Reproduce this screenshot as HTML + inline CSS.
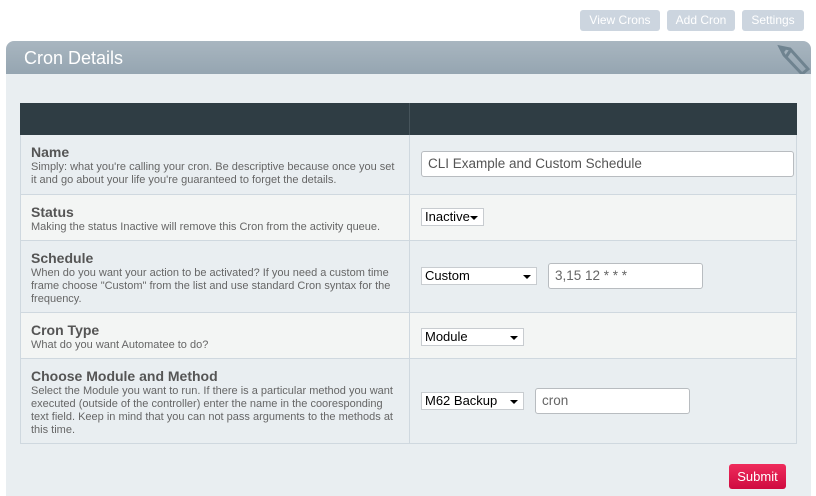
<!DOCTYPE html>
<html><head><style>
*{margin:0;padding:0;box-sizing:border-box}
body{width:816px;height:496px;background:#fff;font-family:"Liberation Sans",Arial,sans-serif;position:relative;overflow:hidden}
.a{position:absolute}
.btn{position:absolute;top:10px;height:21px;background:#ccd5df;color:#fff;font-size:12px;line-height:21px;text-align:center;border-radius:3px}
.hdr{left:6px;top:41px;width:805px;height:33px;border-radius:8px 8px 0 0;background:linear-gradient(#a9b6c0,#95a5b1);color:#fff;font-size:18px;line-height:35px;padding-left:18px}
.body{left:6px;top:74px;width:805px;height:422px;background:#e9eef1}
.row{position:absolute;left:20px;width:777px;border:1px solid #cfd8df;border-top:none}
.l{position:absolute;left:0;top:0;bottom:0;width:389px;border-right:1px solid #cfd8df;padding:9px 10px}
.l b{display:block;font-size:14px;color:#555;margin-bottom:1px}
.l span{font-size:11px;color:#666;line-height:13px;display:block}
.sel{position:absolute;height:18px;background:#fff;border:1px solid #c8ccd0;font-size:13px;line-height:16px;padding-left:3px;color:#000}
.sel:after{content:"";position:absolute;right:5px;top:7px;border:4px solid transparent;border-top:4px solid #000;border-bottom:none}
.inp{position:absolute;height:26px;background:#fff;border:1px solid #b8bcc0;border-radius:3px;font-size:13.5px;line-height:24px;padding-left:6px;color:#666}
</style></head><body>
<div class="btn" style="left:580px;width:80px">View Crons</div>
<div class="btn" style="left:667px;width:68px">Add Cron</div>
<div class="btn" style="left:742px;width:62px">Settings</div>
<div class="a hdr">Cron Details</div>
<svg class="a" style="left:776px;top:43px" width="34" height="31" viewBox="0 0 34 31"><g fill="none" stroke="#6f8390" stroke-width="3"><path d="M4 4 L14 6 L32 26 L26 31 L8 12 Z"/><path d="M4 4 L9 8"/><path d="M14 8 L10 14"/></g></svg>
<div class="a body"></div>
<div class="a" style="left:20px;top:103px;width:777px;height:32px;background:#2f3d44"><div class="a" style="left:389px;top:0;width:1px;height:32px;background:#46545b"></div></div>
<div class="row" style="top:135px;height:60px;background:#e9eef1"><div class="l"><b>Name</b><span>Simply: what you're calling your cron. Be descriptive because once you set it and go about your life you're guaranteed to forget the details.</span></div>
<div class="inp" style="left:400px;top:16px;width:373px;color:#555">CLI Example and Custom Schedule</div></div>
<div class="row" style="top:195px;height:46px;background:#f3f5f4"><div class="l"><b>Status</b><span>Making the status Inactive will remove this Cron from the activity queue.</span></div>
<div class="sel" style="left:400px;top:13px;width:63px">Inactive</div></div>
<div class="row" style="top:241px;height:72px;background:#e9eef1"><div class="l"><b>Schedule</b><span>When do you want your action to be activated? If you need a custom time frame choose "Custom" from the list and use standard Cron syntax for the frequency.</span></div>
<div class="sel" style="left:400px;top:26px;width:116px">Custom</div>
<div class="inp" style="left:527px;top:22px;width:155px">3,15 12 * * *</div></div>
<div class="row" style="top:313px;height:46px;background:#f3f5f4"><div class="l"><b>Cron Type</b><span>What do you want Automatee to do?</span></div>
<div class="sel" style="left:400px;top:15px;width:103px">Module</div></div>
<div class="row" style="top:359px;height:85px;background:#e9eef1"><div class="l"><b>Choose Module and Method</b><span>Select the Module you want to run. If there is a particular method you want executed (outside of the controller) enter the name in the cooresponding text field. Keep in mind that you can not pass arguments to the methods at this time.</span></div>
<div class="sel" style="left:400px;top:33px;width:103px">M62 Backup</div>
<div class="inp" style="left:514px;top:29px;width:155px">cron</div></div>
<div class="a" style="left:729px;top:464px;width:57px;height:25px;border-radius:3px;background:linear-gradient(#ef2c5c,#cf0a40);color:#fff;font-size:13px;line-height:25px;text-align:center">Submit</div>
</body></html>
